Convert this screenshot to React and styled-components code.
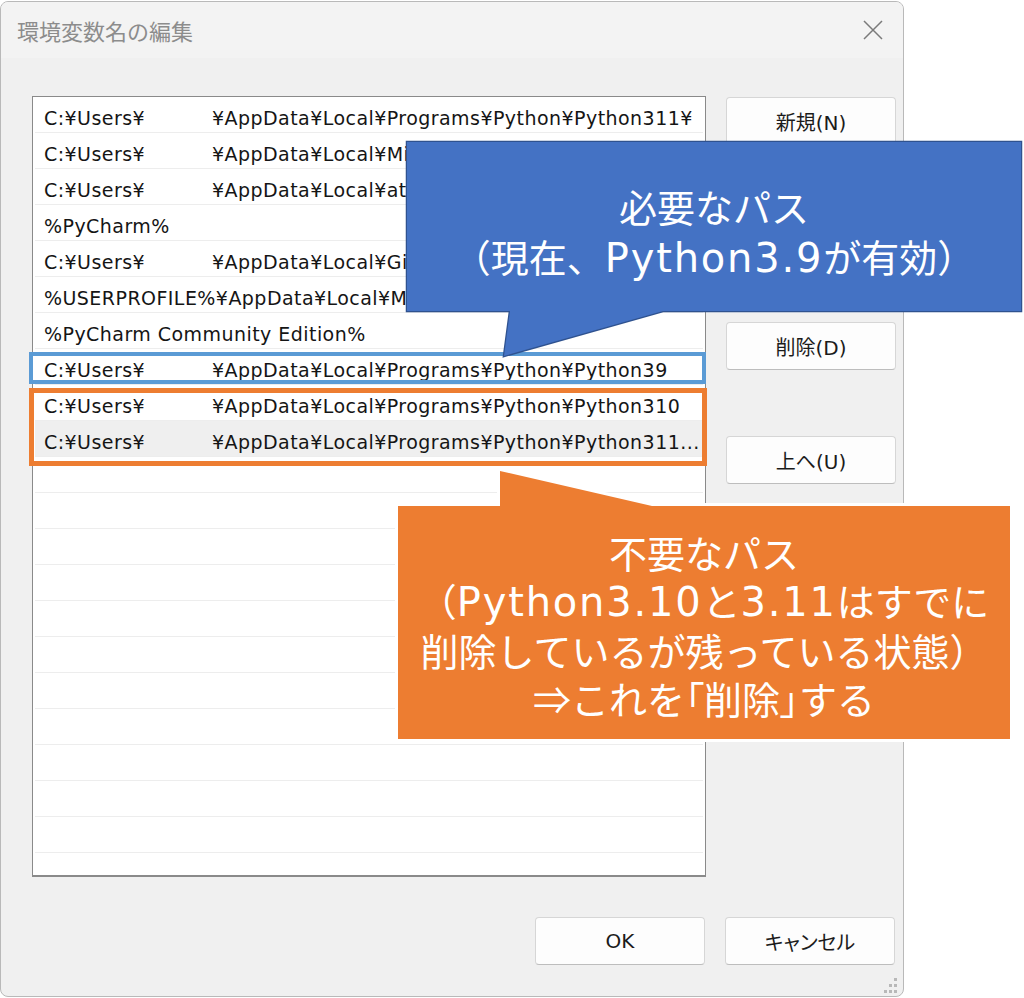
import React from "react";
import styled, { createGlobalStyle } from "styled-components";

const GlobalStyle = createGlobalStyle`
  html, body { margin: 0; padding: 0; background: #ffffff; }
  * { box-sizing: border-box; }
`;

const UI_FONT = `"DejaVu Sans", "Noto Sans CJK JP", sans-serif`;

const Stage = styled.div`
  position: relative;
  width: 1024px;
  height: 998px;
  overflow: hidden;
  background: #ffffff;
  padding-top: 1px;
`;

const Dialog = styled.div`
  position: relative;
  width: 904px;
  height: 996px;
  border: 1px solid #b9b9b9;
  border-radius: 8px;
  overflow: hidden;
  display: flex;
  flex-direction: column;
  background: #f0f0f0;
`;

const TitleBar = styled.div`
  height: 56px;
  flex: none;
  display: flex;
  align-items: center;
  justify-content: space-between;
  padding: 0 20px 0 16px;
  background: #f3f3f3;
`;

const Title = styled.div`
  font-family: "Noto Sans CJK JP", sans-serif;
  font-size: 22px;
  color: #8c8c8c;
  line-height: 1;
`;

const CloseIcon = styled.svg`
  width: 20px;
  height: 20px;
  display: block;
`;

const Body = styled.div`
  flex: 1;
  display: flex;
  flex-direction: column;
  padding: 38px 7px 0 31px;
`;

const Main = styled.div`
  display: flex;
  gap: 20px;
  height: 781px;
`;

const ListBox = styled.div`
  width: 674px;
  height: 781px;
  background: #ffffff;
  border: 1px solid #8a8a8a;
  border-bottom-width: 2px;
  overflow: hidden;
`;

const Row = styled.div`
  height: 36px;
  margin: 0 2px;
  padding: 7px 0 0 9px;
  line-height: 28px;
  border-bottom: 1px solid #ededed;
  background: ${(p) => (p.$selected ? "#efefef" : "transparent")};
  font-family: ${UI_FONT};
  font-size: 19px;
  letter-spacing: 0.45px;
  color: #151515;
  white-space: nowrap;
  overflow: hidden;
`;

const UserPart = styled.span`
  display: inline-block;
  width: 168px;
`;

const ButtonColumn = styled.div`
  width: 170px;
  display: flex;
  flex-direction: column;
  padding-top: 1px;
`;

const ButtonGroup = styled.div`
  display: flex;
  flex-direction: column;
  gap: 27px;
  margin-bottom: ${(p) => p.$after || 0}px;
`;

const Button = styled.div`
  width: 170px;
  height: 48px;
  flex: none;
  display: flex;
  align-items: center;
  justify-content: center;
  background: #fdfdfd;
  border: 1px solid #d6d6d6;
  border-bottom-color: #bdbdbd;
  border-radius: 4px;
  font-family: ${UI_FONT};
  font-size: 20px;
  font-feature-settings: "palt";
  color: #1b1b1b;
`;

const Footer = styled.div`
  display: flex;
  justify-content: flex-end;
  gap: 20px;
  margin-top: 40px;
  padding-right: 1px;
`;

const Grip = styled.svg`
  position: absolute;
  right: 3px;
  bottom: 1px;
  width: 20px;
  height: 20px;
`;

/* ---------- annotation overlays ---------- */

const Mark = styled.div`
  position: absolute;
  left: ${(p) => p.$x}px;
  top: ${(p) => p.$y}px;
  width: ${(p) => p.$w}px;
  height: ${(p) => p.$h}px;
  border: ${(p) => p.$t}px solid ${(p) => p.$color};
  pointer-events: none;
`;

const CalloutBox = styled.div`
  position: absolute;
  left: ${(p) => p.$x}px;
  top: ${(p) => p.$y}px;
  width: ${(p) => p.$w}px;
  height: ${(p) => p.$h}px;
  display: flex;
  align-items: center;
  justify-content: center;
  padding-top: ${(p) => p.$shift}px;
`;

const CalloutShape = styled.svg`
  position: absolute;
  left: 0;
  top: 0;
  overflow: visible;
`;

const CalloutText = styled.div`
  position: relative;
  font-family: "Noto Sans CJK JP", sans-serif;
  font-size: 38px;
  line-height: ${(p) => p.$lh}px;
  color: #ffffff;
  text-align: center;
  white-space: nowrap;
`;

const Latin = styled.span`
  font-family: "DejaVu Sans", sans-serif;
  font-size: 40px;
  letter-spacing: 1.8px;
`;

const Bracket = styled.span`
  font-feature-settings: "palt";
`;

function Callout({ x, y, w, h, path, fill, stroke, strokeWidth, lh, shift, children }) {
  return (
    <CalloutBox $x={x} $y={y} $w={w} $h={h} $shift={shift}>
      <CalloutShape width={w} height={h}>
        <path
          d={path}
          fill={fill}
          stroke={stroke}
          strokeWidth={strokeWidth}
          strokeLinejoin="miter"
          paintOrder="stroke fill"
        />
      </CalloutShape>
      <CalloutText $lh={lh}>{children}</CalloutText>
    </CalloutBox>
  );
}

const rows = [
  { user: true, path: "¥AppData¥Local¥Programs¥Python¥Python311¥" },
  { user: true, path: "¥AppData¥Local¥Microsoft¥WindowsApps" },
  { user: true, path: "¥AppData¥Local¥atom¥bin" },
  { text: "%PyCharm%" },
  { user: true, path: "¥AppData¥Local¥GitHubDesktop¥bin" },
  { text: "%USERPROFILE%¥AppData¥Local¥Microsoft¥WindowsApps" },
  { text: "%PyCharm Community Edition%" },
  { user: true, path: "¥AppData¥Local¥Programs¥Python¥Python39" },
  { user: true, path: "¥AppData¥Local¥Programs¥Python¥Python310" },
  { user: true, path: "¥AppData¥Local¥Programs¥Python¥Python311...", selected: true },
];
while (rows.length < 22) rows.push({ text: "" });

export default function App() {
  return (
    <>
      <GlobalStyle />
      <Stage>
        <Dialog>
          <TitleBar>
            <Title>環境変数名の編集</Title>
            <CloseIcon viewBox="0 0 20 20">
              <path d="M1 1 L19 19 M19 1 L1 19" stroke="#7a7a7a" strokeWidth="1.5" fill="none" />
            </CloseIcon>
          </TitleBar>
          <Body>
            <Main>
              <ListBox>
                {rows.map((r, i) => (
                  <Row key={i} $selected={r.selected}>
                    {r.user ? (
                      <>
                        <UserPart>C:¥Users¥</UserPart>
                        {r.path}
                      </>
                    ) : (
                      r.text
                    )}
                  </Row>
                ))}
              </ListBox>
              <ButtonColumn>
                <ButtonGroup $after={66}>
                  <Button>新規(N)</Button>
                  <Button>編集(E)</Button>
                  <Button>参照(B)</Button>
                  <Button>削除(D)</Button>
                </ButtonGroup>
                <ButtonGroup $after={66}>
                  <Button>上へ(U)</Button>
                  <Button>下へ(O)</Button>
                </ButtonGroup>
                <ButtonGroup>
                  <Button>テキストの編集(T)...</Button>
                </ButtonGroup>
              </ButtonColumn>
            </Main>
            <Footer>
              <Button>OK</Button>
              <Button>キャンセル</Button>
            </Footer>
          </Body>
          <Grip viewBox="0 0 20 20">
            <g fill="#b8b8b8">
              <rect x="14" y="3" width="3" height="3" />
              <rect x="9" y="9" width="3" height="3" />
              <rect x="14" y="9" width="3" height="3" />
              <rect x="4" y="15" width="3" height="3" />
              <rect x="9" y="15" width="3" height="3" />
              <rect x="14" y="15" width="3" height="3" />
            </g>
          </Grip>
        </Dialog>

        <Mark $x={29} $y={352} $w={677} $h={32} $t={4} $color="#5b9bd5" />
        <Mark $x={29} $y={388} $w={678} $h={78} $t={5} $color="#ed7d31" />

        <Callout
          x={407}
          y={142}
          w={614}
          h={169}
          path="M0 0 H614 V169 H256 L97 214 L103 169 H0 Z"
          fill="#4472c4"
          stroke="#2f528f"
          strokeWidth={2.5}
          lh={50}
          shift={11}
        >
          <div>必要なパス</div>
          <div>
            （現在、<Latin>Python3.9</Latin>が有効）
          </div>
        </Callout>
        <Callout
          x={398}
          y={506}
          w={612}
          h={233}
          path="M0 0 H102 V-35 L254 0 H612 V233 H0 Z"
          fill="#ed7d31"
          stroke="#ffffff"
          strokeWidth={6}
          lh={48}
          shift={5}
        >
          <div>不要なパス</div>
          <div>
            （<Latin>Python3.10</Latin>と<Latin>3.11</Latin>はすでに
          </div>
          <div>削除しているが残っている状態）</div>
          <div>
            ⇒これを<Bracket>「</Bracket>削除<Bracket>」</Bracket>する
          </div>
        </Callout>
      </Stage>
    </>
  );
}
